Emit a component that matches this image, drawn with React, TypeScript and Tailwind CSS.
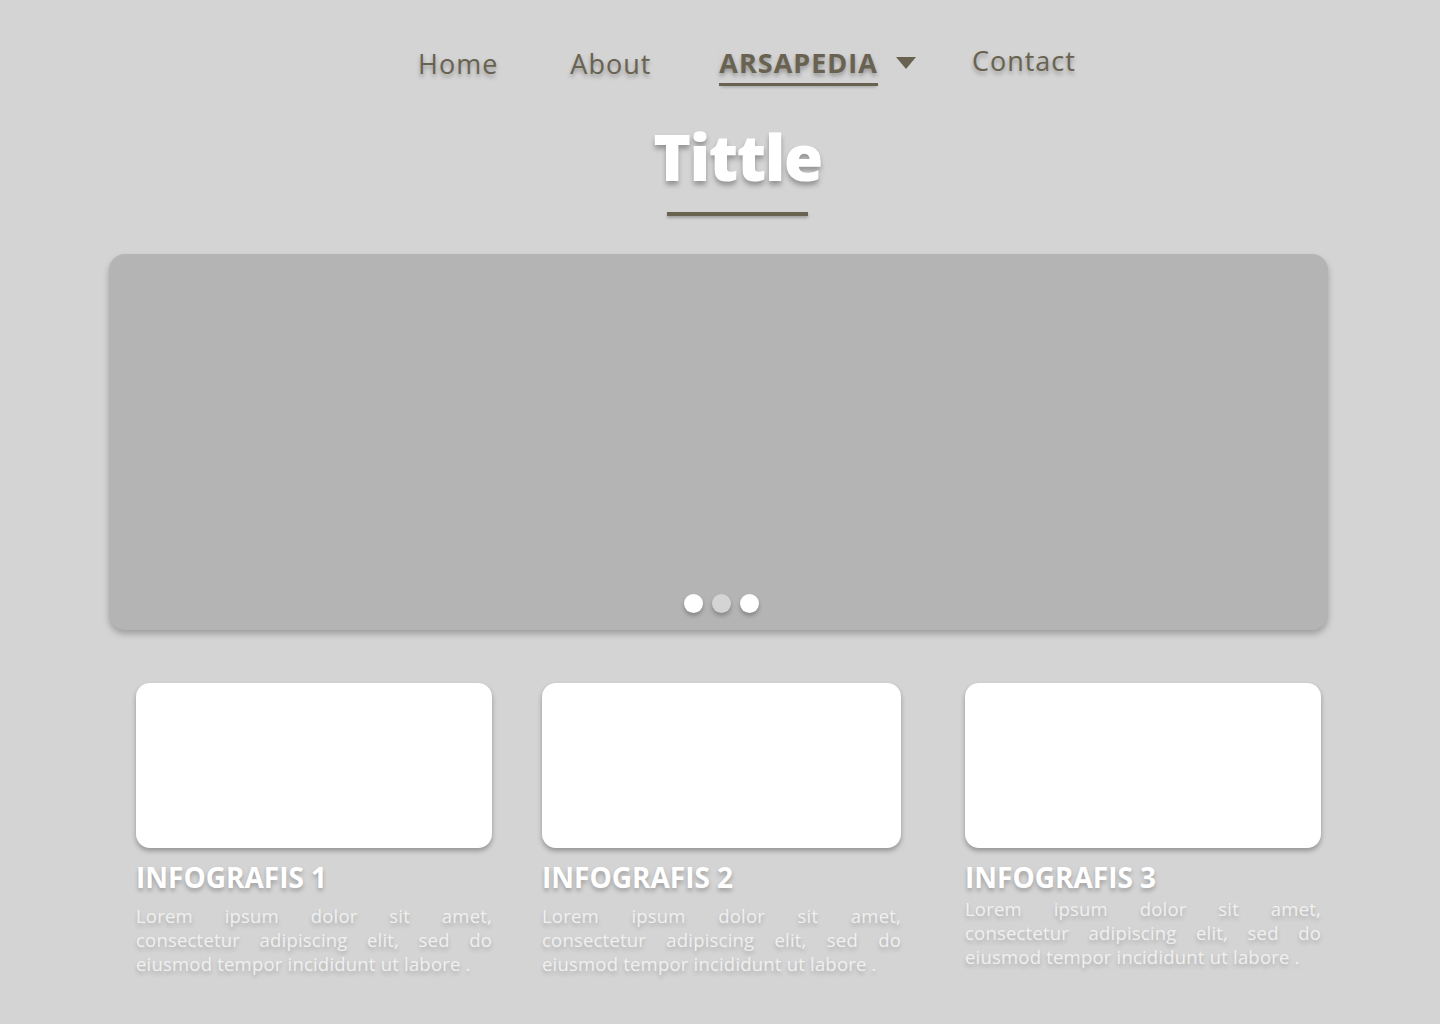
import React from 'react';

const cards = [
  { title: 'INFOGRAFIS 1', width: 'w-[356px]', lift: false },
  { title: 'INFOGRAFIS 2', width: 'w-[359px]', lift: false },
  { title: 'INFOGRAFIS 3', width: 'w-[356px]', lift: true },
];

// lines are split the way the design wraps them
const loremLines = ['Lorem ipsum dolor sit amet,', 'consectetur adipiscing elit, sed do', 'eiusmod tempor incididunt ut labore .'];

function NavBar() {
  return (
    <nav className="flex items-start pl-[418px] pt-[40px] text-[27px] tracking-[1px] text-[#696250] [text-shadow:0_3px_4px_rgba(0,0,0,0.3)]">
      <a className="mt-[4px]">Home</a>
      <a className="ml-[72px] mt-[4px]">About</a>
      <div className="ml-[68px] mt-[4px] flex items-start">
        <a className="font-bold tracking-[1px] border-b-[3px] border-[#696250] pb-[1px] leading-[38px] [box-shadow:0_3px_3px_-2px_rgba(0,0,0,0.25)]">
          ARSAPEDIA
        </a>
        <svg className="ml-[18px] mt-[13px]" width="20" height="12" viewBox="0 0 20 12">
          <path d="M0 0 H20 L10 12 Z" fill="#696250" />
        </svg>
      </div>
      <a className="ml-[56px] mt-[1px]">Contact</a>
    </nav>
  );
}

function Hero() {
  return (
    <div className="flex flex-col items-center mt-[26px] pl-[35px]">
      <h1 className="text-[64px] font-extrabold text-white leading-[90px] tracking-[-1.5px] [text-shadow:0_4px_5px_rgba(0,0,0,0.3)]">
        Tittle
      </h1>
      <div className="mt-[10px] w-[141px] h-[4px] bg-[#696250] [box-shadow:0_2px_3px_rgba(0,0,0,0.25)]" />
    </div>
  );
}

function Slider() {
  return (
    <div className="ml-[109px] w-[1219px] mt-[38px] h-[376px] rounded-[16px] bg-[#b4b4b4] shadow-[0_4px_6px_rgba(0,0,0,0.25)] flex flex-col justify-end items-center pb-[17px]">
      <div className="flex gap-[9px] pl-[6px]">
        <span className="w-[19px] h-[19px] rounded-full bg-white shadow-[0_3px_4px_rgba(0,0,0,0.25)]" />
        <span className="w-[19px] h-[19px] rounded-full bg-[#d4d4d4] shadow-[0_3px_4px_rgba(0,0,0,0.25)]" />
        <span className="w-[19px] h-[19px] rounded-full bg-white shadow-[0_3px_4px_rgba(0,0,0,0.25)]" />
      </div>
    </div>
  );
}

function Cards() {
  return (
    <div className="flex mt-[53px] pl-[136px] gap-[50px]">
      {cards.map((c, i) => (
        <div key={c.title} className={`${c.width} ${i === 2 ? 'ml-[14px]' : ''}`}>
          <div className="h-[165px] rounded-[14px] bg-white shadow-[0_3px_5px_rgba(0,0,0,0.3)]" />
          <h2 className="mt-[10px] text-[28px] font-bold text-white leading-[38px] [text-shadow:0_3px_4px_rgba(0,0,0,0.25)]">
            {c.title}
          </h2>
          <div
            className={`${c.lift ? '-mt-[3px]' : 'mt-[4px]'} pt-[4px] text-[18.5px] tracking-[0.2px] leading-[24px] text-[#f0f0f0] [text-shadow:0_3px_4px_rgba(0,0,0,0.2)]`}
          >
            {loremLines.map((line, j) => (
              <p key={j} className={j < 2 ? 'text-justify [text-align-last:justify]' : 'whitespace-nowrap'}>
                {line}
              </p>
            ))}
          </div>
        </div>
      ))}
    </div>
  );
}

export default function App() {
  return (
    <div className="w-[1440px] h-[1024px] bg-[#d4d4d4] overflow-hidden font-['Open_Sans',sans-serif]">
      <NavBar />
      <Hero />
      <Slider />
      <Cards />
    </div>
  );
}
